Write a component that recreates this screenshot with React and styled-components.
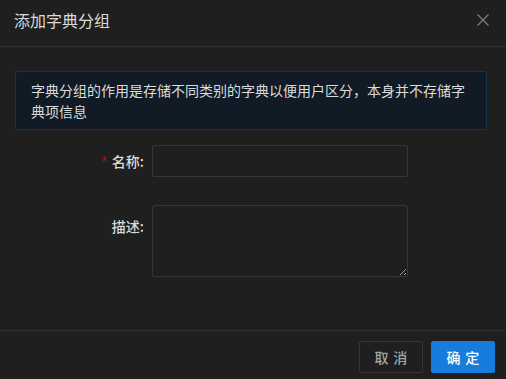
import React from 'react';
import styled, { createGlobalStyle } from 'styled-components';

const GlobalStyle = createGlobalStyle`
  html, body {
    margin: 0;
    padding: 0;
    background: #1f1f1f;
  }
  body {
    font-family: "Noto Sans CJK SC", "Noto Sans", sans-serif;
    color-scheme: dark;
  }
`;

const Dialog = styled.div`
  width: 506px;
  height: 379px;
  background: #1f1f1f;
  display: flex;
  flex-direction: column;
  overflow: hidden;
`;

const Header = styled.div`
  height: 47px;
  box-sizing: border-box;
  flex-shrink: 0;
  display: flex;
  align-items: center;
  justify-content: space-between;
  padding: 0 17px 0 14px;
  border-bottom: 1px solid #303030;
`;

const Title = styled.div`
  font-size: 16px;
  line-height: 22px;
  font-weight: 400;
  color: #dadada;
  margin-top: -6px;
`;

const Close = styled.button`
  width: 12px;
  height: 12px;
  padding: 0;
  border: none;
  background: none;
  display: flex;
  cursor: pointer;
  margin-top: -6px;
`;

const Body = styled.div`
  flex: 1;
  padding: 24px 19px 0 15px;
`;

const Alert = styled.div`
  background: #111b26;
  border: 1px solid #153450;
  border-radius: 2px;
  padding: 8px 15px 7px;
  font-size: 14px;
  line-height: 21px;
  color: #dbdbdb;
`;

const Form = styled.div`
  margin-top: 15px;
  display: flex;
  flex-direction: column;
  gap: 28px;
`;

const Row = styled.div`
  display: flex;
  align-items: flex-start;
`;

const Label = styled.label`
  width: 137px;
  flex-shrink: 0;
  display: flex;
  justify-content: flex-end;
  align-items: center;
  padding-right: 8px;
  box-sizing: border-box;
  font-size: 14px;
  font-weight: 500;
  line-height: 32px;
  color: #dbdbdb;
  margin-top: ${p => p.$offset || 0}px;
`;

const Star = styled.span`
  color: #a61d24;
  font-family: "Liberation Sans", sans-serif;
  font-size: 14px;
  margin-right: 5px;
`;

const Input = styled.input`
  width: 256px;
  height: 32px;
  box-sizing: border-box;
  background: #1f1f1f;
  border: 1px solid #363636;
  border-radius: 2px;
  outline: none;
  color: #dbdbdb;
  padding: 4px 11px;
  font-size: 14px;
  font-family: inherit;
`;

const TextArea = styled.textarea`
  width: 256px;
  height: 72px;
  box-sizing: border-box;
  background: #1f1f1f;
  border: 1px solid #363636;
  border-radius: 2px;
  outline: none;
  color: #dbdbdb;
  padding: 4px 11px;
  font-size: 14px;
  font-family: inherit;
  resize: both;
  display: block;
`;

const Footer = styled.div`
  height: 49px;
  box-sizing: border-box;
  flex-shrink: 0;
  border-top: 1px solid #303030;
  display: flex;
  justify-content: flex-end;
  align-items: flex-start;
  gap: 8px;
  padding: 10px 11px 0 0;
`;

const Button = styled.button`
  width: 64px;
  height: 32px;
  border-radius: 2px;
  font-size: 14px;
  font-family: inherit;
  letter-spacing: 0.34em;
  text-indent: 0.34em;
  cursor: pointer;
  border: 1px solid ${p => (p.$primary ? '#177ddc' : '#363636')};
  background: ${p => (p.$primary ? '#177ddc' : 'transparent')};
  color: ${p => (p.$primary ? '#ffffff' : '#a6a6a6')};
  font-weight: 500;
`;

function App() {
  return (
    <Dialog>
      <GlobalStyle />
      <Header>
        <Title>添加字典分组</Title>
        <Close aria-label="关闭">
          <svg width="12" height="12" viewBox="0 0 12 12">
            <path d="M0.5 0.5 L11.5 11.5 M11.5 0.5 L0.5 11.5" stroke="#7d7d7d" strokeWidth="1.3" fill="none" />
          </svg>
        </Close>
      </Header>
      <Body>
        <Alert>字典分组的作用是存储不同类别的字典以便用户区分，本身并不存储字典项信息</Alert>
        <Form>
          <Row>
            <Label><Star>*</Star>名称:</Label>
            <Input />
          </Row>
          <Row>
            <Label $offset={5}>描述:</Label>
            <TextArea />
          </Row>
        </Form>
      </Body>
      <Footer>
        <Button>取消</Button>
        <Button $primary>确定</Button>
      </Footer>
    </Dialog>
  );
}

export default App;
